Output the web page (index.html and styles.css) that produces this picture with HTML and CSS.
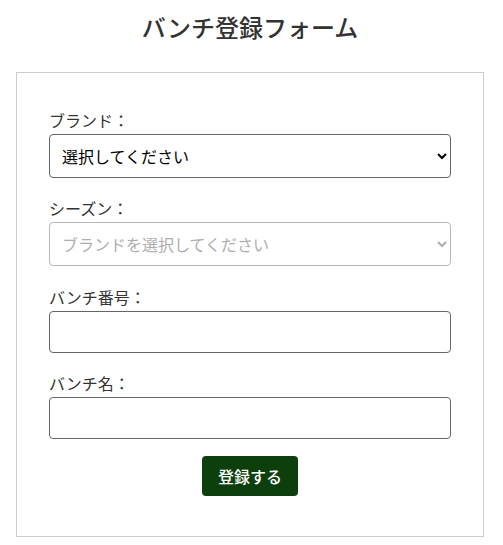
FILE: index.html
```html
<!DOCTYPE html>
<html lang="ja">
<head>
<meta charset="utf-8">
<title>バンチ登録フォーム</title>
<link rel="stylesheet" href="styles.css">
</head>
<body>
<div class="page">
  <h1 class="title">バンチ登録フォーム</h1>
  <form class="card">
    <div class="group g1">
      <label class="label" for="brand">ブランド：</label>
      <select id="brand" class="control">
        <option>選択してください</option>
      </select>
    </div>
    <div class="group g2">
      <label class="label" for="season">シーズン：</label>
      <select id="season" class="control" disabled>
        <option>ブランドを選択してください</option>
      </select>
    </div>
    <div class="group g3">
      <label class="label" for="num">バンチ番号：</label>
      <input id="num" class="control input" type="text">
    </div>
    <div class="group g4">
      <label class="label" for="name">バンチ名：</label>
      <input id="name" class="control input" type="text">
    </div>
    <div class="actions">
      <button type="button" class="submit">登録する</button>
    </div>
  </form>
</div>
</body>
</html>
```
FILE: styles.css
```css
* { box-sizing: border-box; }
html, body { margin: 0; padding: 0; background: #fff; }
body {
  font-family: "Noto Sans CJK JP", "Noto Sans", sans-serif;
  color: #333;
}
.page {
  padding: 0 19px 0 16px;
}
.title {
  margin: 0;
  padding-top: 10px;
  height: 72px;
  text-align: center;
  font-size: 24px;
  line-height: 34px;
  font-weight: 500;
  color: #333;
}
.card {
  border: 1px solid #ccc;
  padding: 36px 32px 40px;
  display: flex;
  flex-direction: column;
}
.group {
  display: flex;
  flex-direction: column;
  margin-bottom: 19px;
}
.g2 { margin-bottom: 20px; }
.g4 { margin-bottom: 17px; }
.label {
  font-size: 16px;
  line-height: 22px;
  margin-bottom: 3px;
  color: #333;
}
.control {
  width: 100%;
  height: 44px;
  border: 1px solid #666;
  border-radius: 4px;
  background: #fff;
  font-family: "Noto Sans CJK JP", "Noto Sans", sans-serif;
  font-size: 16px;
  color: #000;
  padding: 0 8px 0 12px;
}
select.control { padding-left: 8px; }
select.control:disabled {
  color: #8c8c8c;
  border-color: #9a9a9a;
  background: #fff;
}
.input { height: 42px; }
.actions {
  display: flex;
  justify-content: center;
}
.submit {
  width: 96px;
  height: 40px;
  border: none;
  border-radius: 4px;
  background: #0d3f0d;
  color: #fff;
  font-family: "Noto Sans CJK JP", "Noto Sans", sans-serif;
  font-size: 16px;
  font-weight: 500;
}
```
